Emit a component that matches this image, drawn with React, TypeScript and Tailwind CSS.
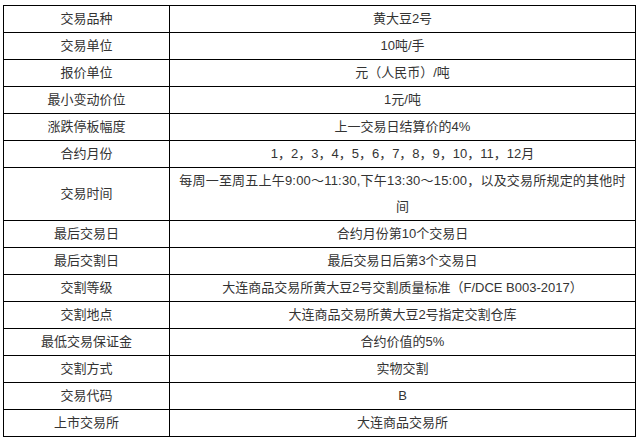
import React from "react";

const rows: [string, React.ReactNode][] = [
  ["交易品种", "黄大豆2号"],
  ["交易单位", "10吨/手"],
  ["报价单位", "元（人民币）/吨"],
  ["最小变动价位", "1元/吨"],
  ["涨跌停板幅度", "上一交易日结算价的4%"],
  ["合约月份", "1，2，3，4，5，6，7，8，9，10，11，12月"],
  [
    "交易时间",
    <span className="tracking-[0.2px]">
      每周一至周五上午9:00～11:30,下午13:30～15:00，以及交易所规定的其他时
      <br />间
    </span>,
  ],
  ["最后交易日", "合约月份第10个交易日"],
  ["最后交割日", "最后交易日后第3个交易日"],
  ["交割等级", "大连商品交易所黄大豆2号交割质量标准（F/DCE B003-2017）"],
  ["交割地点", "大连商品交易所黄大豆2号指定交割仓库"],
  ["最低交易保证金", "合约价值的5%"],
  ["交割方式", "实物交割"],
  ["交易代码", "B"],
  ["上市交易所", "大连商品交易所"],
];

export default function App() {
  return (
    <div
      className="w-[641px] h-[442px] bg-white pl-[3px] pt-[5px] text-[13px] text-[#333]"
      style={{ fontFamily: '"Liberation Sans", "Noto Sans CJK SC", sans-serif' }}
    >
      <table className="border-collapse w-[633px] table-fixed">
        <colgroup>
          <col className="w-[166px]" />
          <col />
        </colgroup>
        <tbody>
          {rows.map(([k, v], i) => (
            <tr key={i}>
              <td className="border border-black text-center align-middle h-[27px] leading-[26px] p-0">
                {k}
              </td>
              <td className="border border-black text-center align-middle h-[27px] leading-[26px] px-[4px] py-0">
                {v}
              </td>
            </tr>
          ))}
        </tbody>
      </table>
    </div>
  );
}
